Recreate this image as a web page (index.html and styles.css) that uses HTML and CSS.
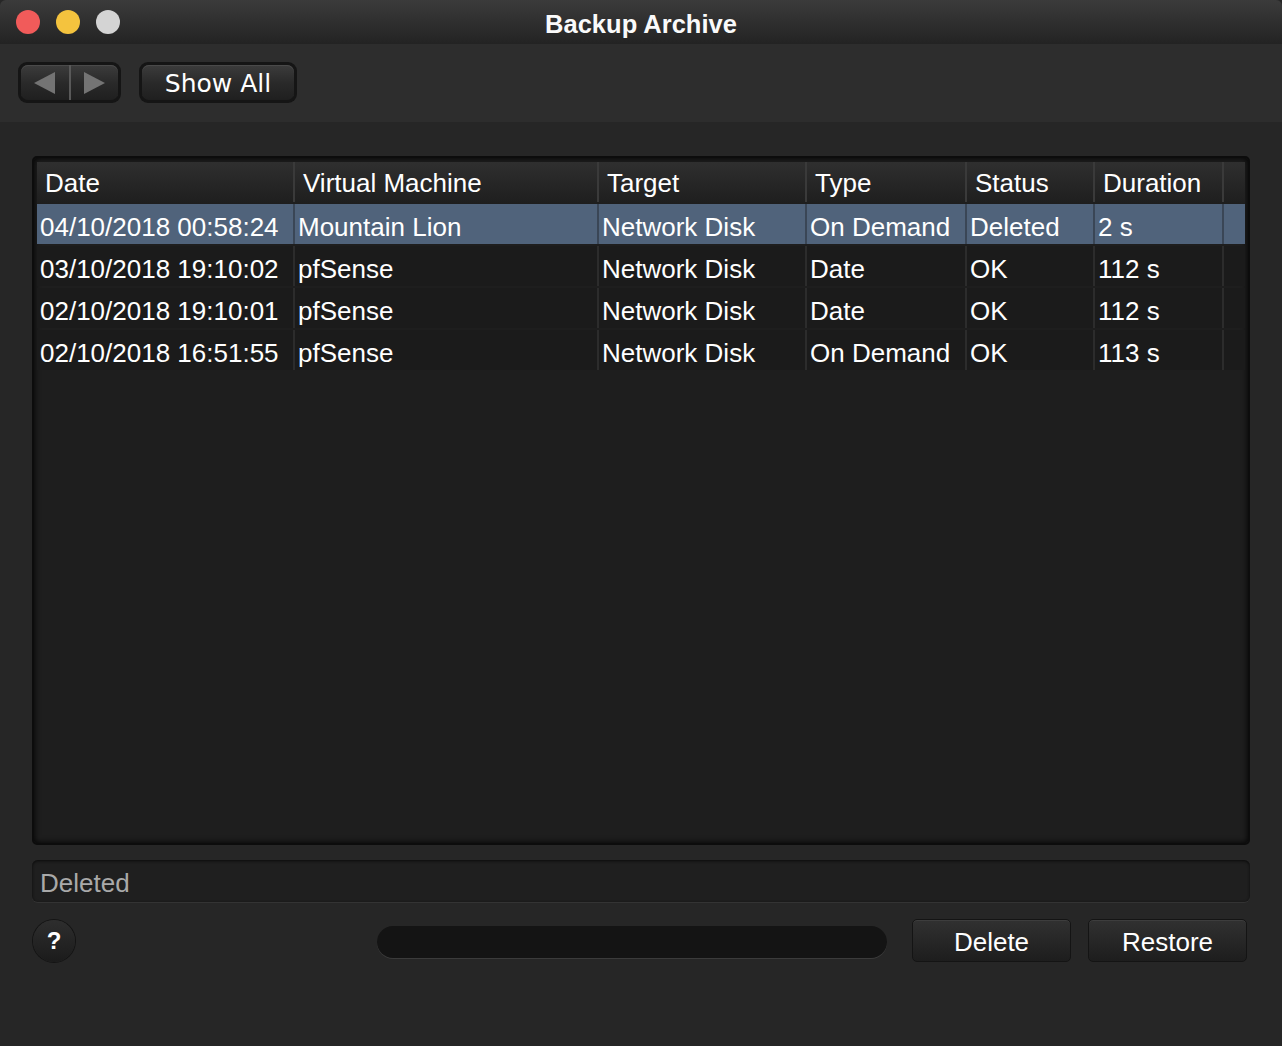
FILE: index.html
```html
<!DOCTYPE html>
<html>
<head>
<meta charset="utf-8">
<link rel="stylesheet" href="styles.css">
</head>
<body>
<div class="window">
  <div class="titlebar">
    <div class="lights">
      <span class="light red"></span>
      <span class="light yellow"></span>
      <span class="light gray"></span>
    </div>
    <div class="title">Backup Archive</div>
  </div>
  <div class="toolbar">
    <div class="nav">
      <div class="nav-inner">
        <span class="nav-btn"><svg width="24" height="24" viewBox="0 0 24 24"><polygon points="22,1 22,23 1,12" fill="#747474"/></svg></span>
        <span class="nav-div"></span>
        <span class="nav-btn"><svg width="24" height="24" viewBox="0 0 24 24"><polygon points="2,1 2,23 23,12" fill="#747474"/></svg></span>
      </div>
    </div>
    <div class="showall"><div class="showall-inner">Show All</div></div>
  </div>
  <div class="content">
    <div class="table">
      <div class="thead">
        <div class="th">Date</div>
        <div class="th">Virtual Machine</div>
        <div class="th">Target</div>
        <div class="th">Type</div>
        <div class="th">Status</div>
        <div class="th">Duration</div>
        <div class="th"></div>
      </div>
      <div class="row selected">
        <div class="td">04/10/2018 00:58:24</div>
        <div class="td">Mountain Lion</div>
        <div class="td">Network Disk</div>
        <div class="td">On Demand</div>
        <div class="td">Deleted</div>
        <div class="td">2 s</div>
        <div class="td"></div>
      </div>
      <div class="row">
        <div class="td">03/10/2018 19:10:02</div>
        <div class="td">pfSense</div>
        <div class="td">Network Disk</div>
        <div class="td">Date</div>
        <div class="td">OK</div>
        <div class="td">112 s</div>
        <div class="td"></div>
      </div>
      <div class="row">
        <div class="td">02/10/2018 19:10:01</div>
        <div class="td">pfSense</div>
        <div class="td">Network Disk</div>
        <div class="td">Date</div>
        <div class="td">OK</div>
        <div class="td">112 s</div>
        <div class="td"></div>
      </div>
      <div class="row">
        <div class="td">02/10/2018 16:51:55</div>
        <div class="td">pfSense</div>
        <div class="td">Network Disk</div>
        <div class="td">On Demand</div>
        <div class="td">OK</div>
        <div class="td">113 s</div>
        <div class="td"></div>
      </div>
    </div>
    <div class="statusfield">Deleted</div>
    <div class="bottom">
      <div class="help">?</div>
      <div class="progress"></div>
      <div class="btn">Delete</div>
      <div class="btn">Restore</div>
    </div>
  </div>
</div>
</body>
</html>
```
FILE: styles.css
```css
html, body {
  margin: 0;
  padding: 0;
  background: #262626;
}
body {
  width: 1282px;
  height: 1046px;
  overflow: hidden;
  font-family: "Liberation Sans", Arial, sans-serif;
  color: #fff;
}
.window {
  width: 1282px;
  height: 1046px;
  display: flex;
  flex-direction: column;
  background: #272727;
}
.titlebar {
  height: 44px;
  flex: none;
  box-sizing: border-box;
  padding-top: 4px;
  position: relative;
  display: flex;
  align-items: center;
  justify-content: center;
  background: linear-gradient(#3b3b3b, #232323);
  border-radius: 6px 6px 0 0;
}
.lights {
  position: absolute;
  left: 16px;
  top: 10px;
  display: flex;
  gap: 16px;
}
.light {
  width: 24px;
  height: 24px;
  border-radius: 50%;
  display: block;
}
.light.red { background: #f15b5a; }
.light.yellow { background: #f4c33e; }
.light.gray { background: #d4d4d4; }
.title {
  font-weight: bold;
  font-size: 25.5px;
  color: #fafafa;
}
.toolbar {
  height: 78px;
  flex: none;
  box-sizing: border-box;
  padding: 18px 0 0 18px;
  display: flex;
  gap: 18px;
  background: #2d2d2d;
}
.nav, .showall {
  height: 41px;
  box-sizing: border-box;
  padding: 3px;
  border-radius: 9px;
  background: #151515;
}
.nav { width: 103px; }
.showall { width: 158px; }
.nav-inner, .showall-inner {
  height: 100%;
  border-radius: 7px;
  background: linear-gradient(#3c3c3c, #2a2a2a 50%, #1f1f1f);
  box-shadow: inset 0 1px 0 #4a4a4a;
}
.nav-inner {
  display: flex;
  align-items: center;
}
.nav-btn {
  flex: 1;
  display: flex;
  justify-content: center;
  align-items: center;
}
.nav-div {
  width: 2px;
  height: 100%;
  background: #595959;
}
.showall-inner {
  display: flex;
  align-items: center;
  justify-content: center;
  padding-top: 2px;
  box-sizing: border-box;
  font-family: "DejaVu Sans", sans-serif;
  font-size: 25px;
  color: #fff;
}
.content {
  flex: 1;
  display: flex;
  flex-direction: column;
  padding: 34px 32px 0 32px;
  background: #262626;
}
.table {
  height: 689px;
  box-sizing: border-box;
  border: 2px solid #0c0c0c;
  border-radius: 5px;
  padding: 4px 3px;
  background: #1e1e1e;
  display: flex;
  flex-direction: column;
  gap: 2px;
  box-shadow: inset 0 0 6px #000;
}
.thead, .row {
  display: grid;
  grid-template-columns: 256px 302px 206px 158px 126px 127px 21px;
  column-gap: 2px;
}
.thead {
  height: 40px;
  background: #3a3a3a;
}
.th {
  background: linear-gradient(#2f2f2f, #1e1e1e);
  font-size: 26px;
  line-height: 42px;
  padding-left: 8px;
  white-space: nowrap;
  color: #fff;
}
.row {
  height: 40px;
  background: #2c2c2c;
}
.td {
  background: #1b1b1b;
  font-size: 26px;
  line-height: 46px;
  padding-left: 3px;
  white-space: nowrap;
  overflow: hidden;
}
.row.selected {
  background: #3a4656;
}
.row.selected .td {
  background: #50637b;
}
.statusfield {
  margin-top: 15px;
  height: 42px;
  box-sizing: border-box;
  border-radius: 6px;
  background: #1f1f1f;
  box-shadow: inset 0 1px 3px #0a0a0a, 0 1px 0 #333;
  font-size: 26px;
  line-height: 46px;
  padding-left: 8px;
  color: #a9a9a9;
}
.bottom {
  margin-top: 17px;
  height: 43px;
  display: flex;
  align-items: center;
  padding-right: 3px;
}
.help {
  width: 42px;
  height: 42px;
  margin-left: 1px;
  margin-top: 1px;
  border-radius: 50%;
  background: linear-gradient(#2e2e2e, #1b1b1b);
  box-shadow: 0 0 0 1px #141414;
  display: flex;
  align-items: center;
  justify-content: center;
  font-weight: bold;
  font-size: 24px;
  color: #fff;
}
.progress {
  margin-left: auto;
  width: 510px;
  height: 32px;
  margin-top: 2px;
  border-radius: 16px;
  background: #141414;
  box-shadow: 0 1px 0 #3b3b3b;
  margin-right: 25px;
}
.btn {
  width: 159px;
  height: 43px;
  box-sizing: border-box;
  padding-top: 3px;
  border-radius: 5px;
  border: 1px solid #141414;
  background: linear-gradient(#313131, #1d1d1d);
  box-shadow: inset 0 1px 0 #3d3d3d;
  display: flex;
  align-items: center;
  justify-content: center;
  font-size: 26px;
  color: #fff;
}
.btn + .btn {
  margin-left: 17px;
}
```
